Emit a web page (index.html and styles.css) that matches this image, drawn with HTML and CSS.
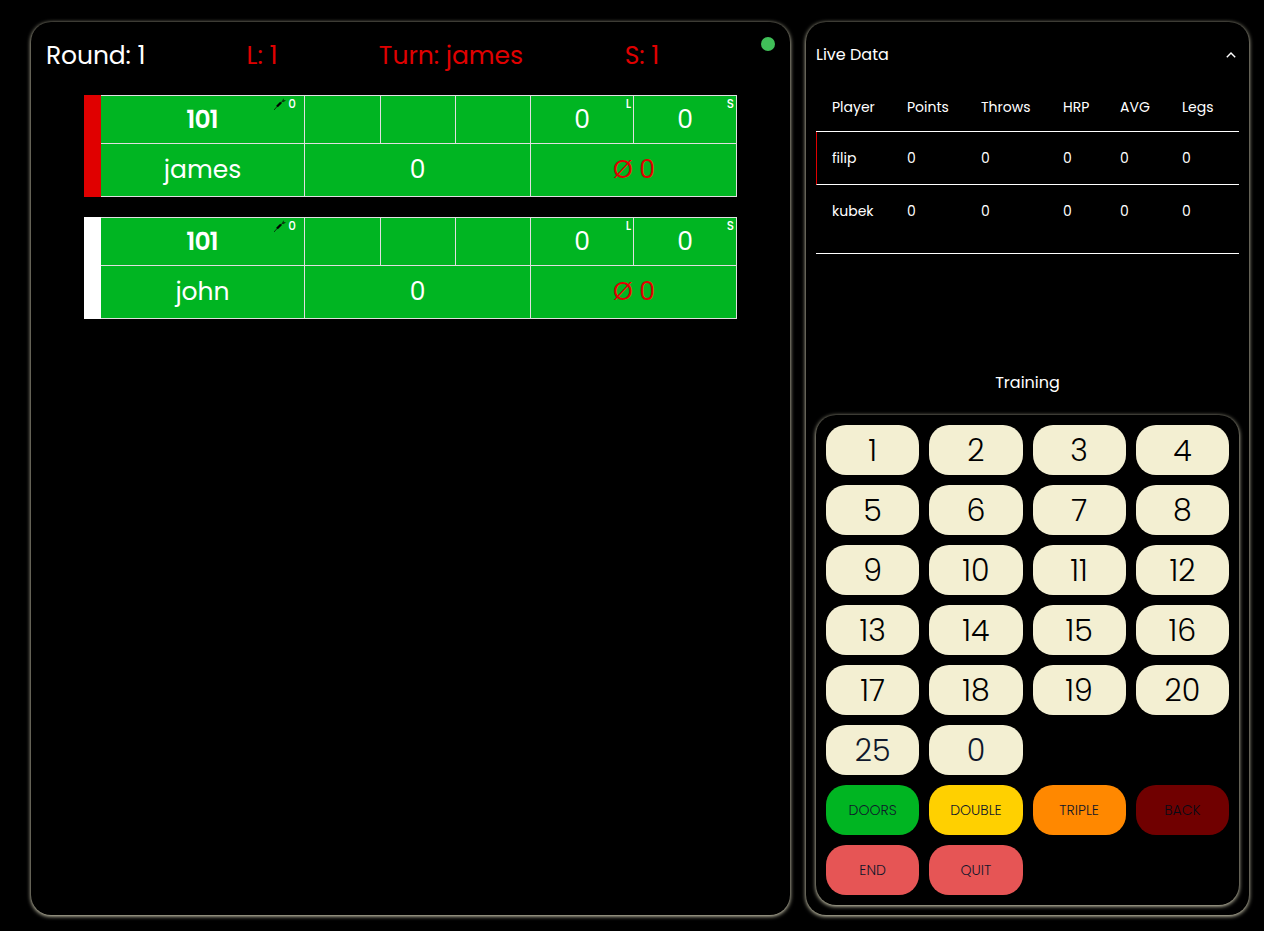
FILE: index.html
```
<!DOCTYPE html>
<html lang="en">
<head>
<meta charset="utf-8">
<title>Darts</title>
<link rel="stylesheet" href="styles.css">
</head>
<body>
<main class="layout">
  <section class="panel board">
    <header class="status">
      <span class="round">Round: 1</span>
      <span class="leg">L: 1</span>
      <span class="turn">Turn: james</span>
      <span class="set">S: 1</span>
      <i class="online"></i>
    </header>
    <article class="player active">
      <div class="cells">
        <div class="cell score"><b>101</b><span class="corner darts"><svg class="dart" viewBox="0 0 12 12"><path d="M0 12 3.5 8" stroke="#062b0b" stroke-width=".9"/><path d="M3 8.5 7 4.5" stroke="#000" stroke-width="2.3"/><path d="M6.5 5 9.5 2.5" stroke="#062b0b" stroke-width="1"/><path d="M8 3 9.4.2 10 2 12 2.2 9.5 4.2Z" fill="#063f10"/></svg>0</span></div>
        <div class="cell"></div><div class="cell"></div><div class="cell"></div>
        <div class="cell">0<span class="corner">L</span></div>
        <div class="cell">0<span class="corner">S</span></div>
        <div class="cell name">james</div>
        <div class="cell total">0</div>
        <div class="cell average">Ø 0</div>
      </div>
    </article>
    <article class="player">
      <div class="cells">
        <div class="cell score"><b>101</b><span class="corner darts"><svg class="dart" viewBox="0 0 12 12"><path d="M0 12 3.5 8" stroke="#062b0b" stroke-width=".9"/><path d="M3 8.5 7 4.5" stroke="#000" stroke-width="2.3"/><path d="M6.5 5 9.5 2.5" stroke="#062b0b" stroke-width="1"/><path d="M8 3 9.4.2 10 2 12 2.2 9.5 4.2Z" fill="#063f10"/></svg>0</span></div>
        <div class="cell"></div><div class="cell"></div><div class="cell"></div>
        <div class="cell">0<span class="corner">L</span></div>
        <div class="cell">0<span class="corner">S</span></div>
        <div class="cell name">john</div>
        <div class="cell total">0</div>
        <div class="cell average">Ø 0</div>
      </div>
    </article>
  </section>
  <aside class="panel side">
    <div class="live-head"><span>Live Data</span><svg class="chevron" viewBox="0 0 10 6"><path d="M.8 5.2 5 1 9.2 5.2" fill="none" stroke="#fff" stroke-width="1.4"/></svg></div>
    <div class="live">
      <div class="row head"><span>Player</span><span>Points</span><span>Throws</span><span>HRP</span><span>AVG</span><span>Legs</span></div>
      <div class="row current"><span>filip</span><span>0</span><span>0</span><span>0</span><span>0</span><span>0</span></div>
      <div class="row"><span>kubek</span><span>0</span><span>0</span><span>0</span><span>0</span><span>0</span></div>
    </div>
    <div class="mode">Training</div>
    <div class="keypad">
      <button>1</button><button>2</button><button>3</button><button>4</button>
      <button>5</button><button>6</button><button>7</button><button>8</button>
      <button>9</button><button>10</button><button>11</button><button>12</button>
      <button>13</button><button>14</button><button>15</button><button>16</button>
      <button>17</button><button>18</button><button>19</button><button>20</button>
      <button class="ink">25</button><button class="ink">0</button>
      <button class="action doors">DOORS</button><button class="action double">DOUBLE</button><button class="action triple">TRIPLE</button><button class="action back">BACK</button>
      <button class="action exit">END</button><button class="action exit">QUIT</button>
    </div>
  </aside>
</main>
</body>
</html>
```
FILE: styles.css
```
* { box-sizing: border-box; }
body {
  margin: 0;
  background: #000;
  color: #fff;
  font-family: Poppins, Inter, sans-serif;
}
.layout {
  display: grid;
  grid-template-columns: 759px 443px;
  gap: 16px;
  height: 931px;
  padding: 22px 0 16px 31px;
}
.panel, .keypad {
  border-radius: 20px;
  box-shadow: 0 1px 4px #f3efd2;
  background: #000;
}
.status {
  position: relative;
  display: grid;
  grid-template-columns: 150px 132px 246px 136px;
  height: 73px;
  padding: 0 0 6px 15px;
  align-items: center;
  text-align: center;
  font-size: 25px;
  white-space: nowrap;
  color: #e00000;
}
.round { text-align: left; color: #fff; letter-spacing: -0.1px; }
.online {
  position: absolute;
  top: 15px;
  right: 15px;
  width: 14px;
  height: 14px;
  border-radius: 50%;
  background: #40bf58;
}
.player {
  width: 653px;
  height: 102px;
  margin: 0 0 20px 53px;
  padding-left: 17px;
  background: #fff;
}
.player.active { background: #e00000; }
.cells {
  display: grid;
  grid-template-columns: 203px 75px 74px 74px 102px 102px;
  grid-template-rows: 47px 52px;
  gap: 1px;
  padding: 1px 1px 1px 0;
  background: #e0e0e0;
}
.cell {
  position: relative;
  display: flex;
  align-items: center;
  justify-content: center;
  background: #00b522;
  font-size: 25px;
}
.score { padding-right: 1px; letter-spacing: -1px; }
.score b { font-weight: 600; }
.total { grid-column: 2 / 5; }
.average { grid-column: 5 / 7; padding-left: 1px; color: #e00000; }
.corner {
  position: absolute;
  top: 1px;
  right: 2px;
  font-size: 12px;
  line-height: 14px;
  font-weight: 500;
  letter-spacing: 0;
}
.darts { right: 8px; display: flex; gap: 2px; }
.dart { width: 12px; height: 12px; margin-top: 1px; }
.side { padding: 0 10px; }
.live-head {
  display: flex;
  align-items: center;
  justify-content: space-between;
  height: 64px;
  padding-right: 3px;
  font-size: 16px;
}
.chevron { width: 10px; height: 6px; margin-top: 2px; }
.live { font-size: 14px; }
.row {
  display: grid;
  grid-template-columns: 75px 74px 82px 57px 62px 57px;
  height: 53px;
  padding-left: 16px;
  align-items: center;
  border-bottom: 1px solid #fff;
}
.row.head { height: 46px; padding-bottom: 3px; }
.row.current { border-left: 1px solid #e00000; padding-left: 15px; }
.row:last-child { height: 69px; padding-bottom: 16px; }
.mode {
  height: 161px;
  padding-top: 119px;
  font-size: 16px;
  line-height: 20px;
  text-align: center;
}
.keypad {
  display: grid;
  grid-template-columns: repeat(4, 1fr);
  grid-auto-rows: 50px;
  gap: 10px;
  padding: 10px;
}
.keypad button {
  padding: 1px 0 0;
  border: 0;
  border-radius: 20px;
  background: #f3efd2;
  color: #000;
  font: 300 30px Poppins, Inter, sans-serif;
}
.keypad .ink { color: #0f172a; }
.keypad .action { font-size: 14px; color: #0f172a; }
.keypad .doors, .keypad .exit:nth-last-child(2) { grid-column-start: 1; }
.keypad .doors { background: #00b522; }
.keypad .double { background: #ffd000; }
.keypad .triple { background: #ff8800; }
.keypad .back { background: #e00000; opacity: .5; }
.keypad .exit { background: #e65555; }
```
